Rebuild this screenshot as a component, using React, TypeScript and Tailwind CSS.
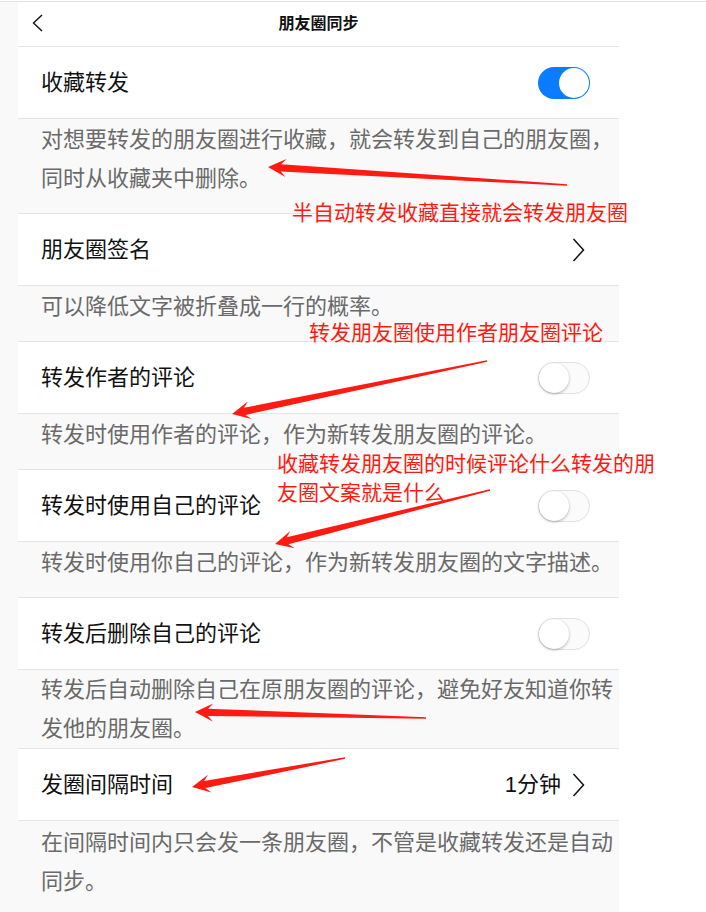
import React from 'react';

type Pt = [number, number];

// tapered annotation arrow: thin tail, thick near the barbed head
const arrowPoints = (tail: Pt, tip: Pt) => {
  const dx = tip[0] - tail[0];
  const dy = tip[1] - tail[1];
  const len = Math.hypot(dx, dy);
  const ux = dx / len;
  const uy = dy / len;
  const nx = -uy;
  const ny = ux;
  const L = 18;
  const W = 9;
  const w1 = 3.6;
  const w0 = 0.8;
  const at = (d: number, s: number): string =>
    `${(tip[0] - ux * d + nx * s).toFixed(1)},${(tip[1] - uy * d + ny * s).toFixed(1)}`;
  return [
    `${(tail[0] + nx * w0).toFixed(1)},${(tail[1] + ny * w0).toFixed(1)}`,
    at(L - 5, w1),
    at(L, W),
    at(0, 0),
    at(L, -W),
    at(L - 5, -w1),
    `${(tail[0] - nx * w0).toFixed(1)},${(tail[1] - ny * w0).toFixed(1)}`,
  ].join(' ');
};

const arrows: [Pt, Pt][] = [
  [[567, 185], [268, 167]],
  [[487, 361], [232, 414]],
  [[490, 490], [275, 544]],
  [[426, 718], [195, 712]],
  [[345, 758], [192, 787]],
];

const Toggle = ({ on }: { on?: boolean }) =>
  on ? (
    <div className="w-[52px] h-[32px] rounded-full bg-[#0a7cff] flex items-center justify-end p-px">
      <div className="w-[30px] h-[30px] rounded-full bg-white" />
    </div>
  ) : (
    <div className="w-[52px] h-[32px] rounded-full bg-[#fbfbfb] border border-[#e2e2e2] flex items-center justify-start">
      <div className="w-[30px] h-[30px] rounded-full bg-white shadow-[0_1px_3px_rgba(0,0,0,0.3)]" />
    </div>
  );

const Chevron = () => (
  <svg width="13" height="24" viewBox="0 0 13 24" fill="none">
    <polyline points="1.5,1 11.5,12 1.5,23" stroke="#111" strokeWidth="1.5" />
  </svg>
);

const Row = ({ label, right }: { label: string; right: React.ReactNode }) => (
  <div className="h-[72px] border-b border-[#e5e5e5] bg-white flex items-center justify-between pl-[23px] pr-[29px]">
    <span className="text-[22px] text-[#111]">{label}</span>
    {right}
  </div>
);

const Desc = ({ children, className = 'pt-px pb-[15px] border-b border-[#e5e5e5]' }: { children: React.ReactNode; className?: string }) => (
  <div className={`bg-[#f9f9f9] pl-[23px] pr-[6px] text-[22px] leading-[39px] text-[#6a6a6a] ${className}`}>{children}</div>
);

export default function App() {
  return (
    <div className="relative w-[706px] h-[912px] overflow-hidden bg-white font-['Liberation_Sans','Noto_Sans_CJK_SC',sans-serif]">
      <div className="h-px bg-white" />
      <div className="h-px bg-[#e2e2e2]" />
      <div className="flex h-[910px]">
        <div className="w-[18px] bg-[#f9f9f9]" />
        <div className="w-[601px] flex flex-col bg-[#f9f9f9]">
          <div className="h-[45px] border-b border-[#e5e5e5] bg-white relative flex items-center justify-center">
            <svg className="absolute left-[14px] top-[12px]" width="11" height="18" viewBox="0 0 11 18" fill="none">
              <polyline points="10,1 1.5,9 10,17" stroke="#111" strokeWidth="1.4" />
            </svg>
            <span className="text-[16px] font-bold text-[#111]">朋友圈同步</span>
          </div>

          <Row label="收藏转发" right={<Toggle on />} />
          <Desc>
            对想要转发的朋友圈进行收藏，就会转发到自己的朋友圈，
            <br />
            同时从收藏夹中删除。
          </Desc>

          <Row label="朋友圈签名" right={<div className="pr-[5px]"><Chevron /></div>} />
          <Desc>可以降低文字被折叠成一行的概率。</Desc>

          <Row label="转发作者的评论" right={<Toggle />} />
          <Desc>转发时使用作者的评论，作为新转发朋友圈的评论。</Desc>

          <Row label="转发时使用自己的评论" right={<Toggle />} />
          <Desc>转发时使用你自己的评论，作为新转发朋友圈的文字描述。</Desc>

          <Row label="转发后删除自己的评论" right={<Toggle />} />
          <Desc className="border-b border-[#e5e5e5]">
            转发后自动删除自己在原朋友圈的评论，避免好友知道你转
            <br />
            发他的朋友圈。
          </Desc>

          <Row
            label="发圈间隔时间"
            right={
              <div className="flex items-center gap-[11px] pr-[5px]">
                <span className="text-[22px] text-[#111]">1分钟</span>
                <Chevron />
              </div>
            }
          />
          <Desc className="pt-[2px] flex-1">
            在间隔时间内只会发一条朋友圈，不管是收藏转发还是自动
            <br />
            同步。
          </Desc>
        </div>
        <div className="flex-1 bg-white" />
      </div>

      {/* red annotations drawn over the screenshot */}
      <svg className="absolute left-0 top-0 pointer-events-none" width="706" height="912" viewBox="0 0 706 912">
        {arrows.map(([t, p], i) => (
          <polygon key={i} points={arrowPoints(t, p)} fill="#ff1a12" />
        ))}
      </svg>
      <div className="absolute left-[292px] top-[199px] text-[21px] leading-[28px] text-[#ff1a12] whitespace-nowrap">
        半自动转发收藏直接就会转发朋友圈
      </div>
      <div className="absolute left-[309px] top-[319px] text-[21px] leading-[28px] text-[#ff1a12] whitespace-nowrap">
        转发朋友圈使用作者朋友圈评论
      </div>
      <div className="absolute left-[277px] top-[449px] text-[21px] leading-[29px] text-[#ff1a12] whitespace-nowrap">
        收藏转发朋友圈的时候评论什么转发的朋
        <br />
        友圈文案就是什么
      </div>
    </div>
  );
}
